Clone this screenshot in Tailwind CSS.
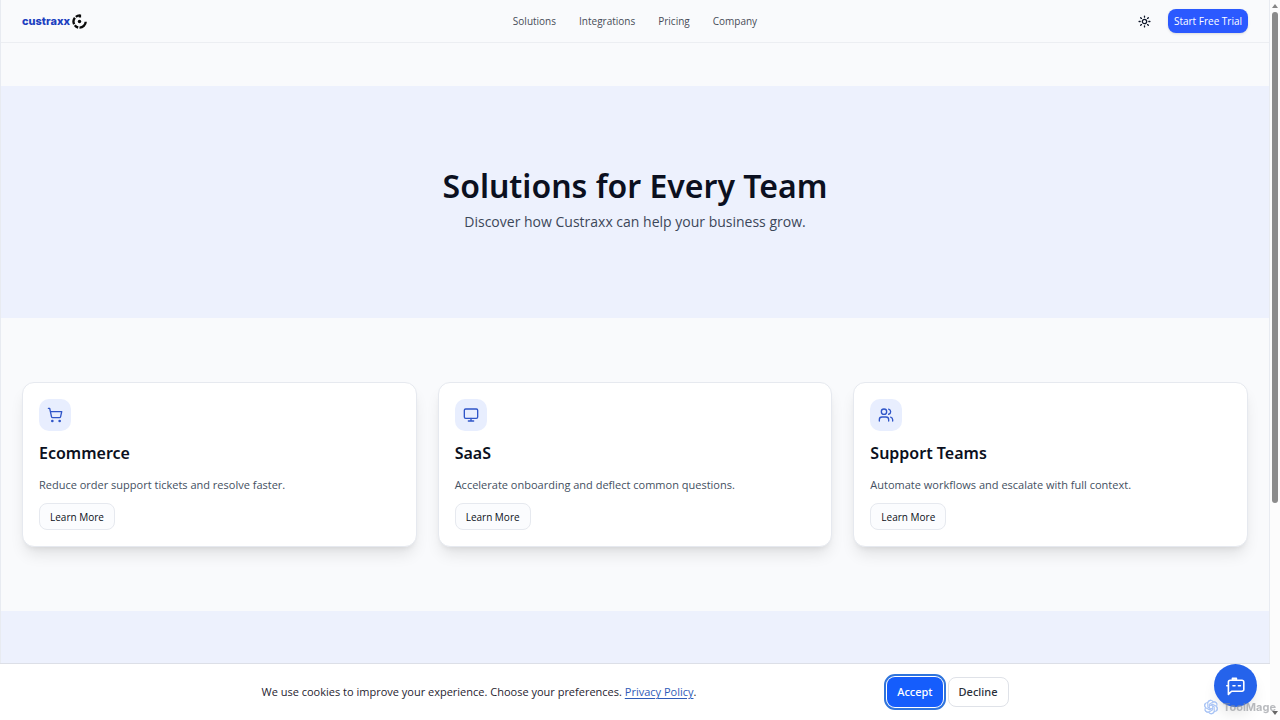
<!DOCTYPE html>
<html lang="en">
<head>
    <meta charset="UTF-8">
    <meta name="viewport" content="width=device-width, initial-scale=1.0">
    <title>Solutions - Custraxx</title>
    <script src="https://cdn.jsdelivr.net/npm/@tailwindcss/browser@4"></script>
</head>
<body class="bg-[#f9fafc] font-['Open_Sans','Noto_Sans',sans-serif] text-[#0b1020]">

    <div class="flex min-h-screen">
        <div class="flex min-w-0 flex-1 flex-col border-x border-[#e8ebf1]">

            <header class="grid h-[43px] grid-cols-[1fr_auto_1fr] items-center border-b border-[#eceef2] px-[21px]">
                <a href="#" class="flex items-center gap-[2px]" aria-label="Custraxx home">
                    <span class="font-['Inter',sans-serif] text-[11px] font-extrabold leading-4 text-[#1d3fc0]">custraxx</span>
                    <svg class="size-[15px]" viewBox="0 0 14 14" fill="none" stroke="#0a0a0a" stroke-width="2.2">
                        <path d="M7.4 1.3A5.7 5.7 0 0 0 3.6 2.6M2.7 3.4A5.7 5.7 0 0 0 2 9.5M2.6 10.5A5.7 5.7 0 0 0 5.8 12.6M7 12.7A5.7 5.7 0 0 0 12.8 7.2M7.4 .4V3.2"/>
                        <circle cx="7" cy="7" r="1.6" fill="#0a0a0a" stroke="none"/>
                    </svg>
                </a>
                <nav class="flex gap-[23px] text-[10px] leading-4 text-[#474c57]">
                    <a href="#">Solutions</a>
                    <a href="#">Integrations</a>
                    <a href="#">Pricing</a>
                    <a href="#">Company</a>
                </nav>
                <div class="flex items-center justify-end gap-4">
                    <button type="button" aria-label="Toggle theme" class="p-px">
                        <svg class="size-[13px]" viewBox="0 0 24 24" fill="none" stroke="#0f172a" stroke-width="2.4" stroke-linecap="round">
                            <circle cx="12" cy="12" r="4"/>
                            <path d="M12 2v2M12 20v2M4.93 4.93l1.41 1.41M17.66 17.66l1.41 1.41M2 12h2M20 12h2M6.34 17.66l-1.41 1.41M19.07 4.93l-1.41 1.41"/>
                        </svg>
                    </button>
                    <button type="button" class="h-6 w-20 rounded-lg bg-[#2b59ff] text-[10px] font-medium leading-4 text-white shadow-sm">Start Free Trial</button>
                </div>
            </header>

            <main class="flex flex-1 flex-col pt-[43px]">
                <section class="flex h-[232px] flex-col items-center justify-center bg-[#edf1fd] text-center">
                    <h1 class="font-['Noto_Sans',sans-serif] text-[32px] font-semibold leading-10">Solutions for Every Team</h1>
                    <p class="text-sm leading-8 text-[#3c4759]">Discover how Custraxx can help your business grow.</p>
                </section>

                <section class="grid grid-cols-3 gap-[21px] px-[21px] py-16">
                    <article class="rounded-xl border border-[#e6e9ef] bg-white p-4 shadow-lg">
                        <div class="flex size-8 items-center justify-center rounded-[10px] bg-[#e8eefe]">
                            <svg class="size-4" viewBox="0 0 24 24" fill="none" stroke="#2f55c8" stroke-width="2" stroke-linecap="round" stroke-linejoin="round">
                                <circle cx="8" cy="21" r="1"/>
                                <circle cx="19" cy="21" r="1"/>
                                <path d="M2.05 2.05h2l2.66 12.42a2 2 0 0 0 2 1.58h9.78a2 2 0 0 0 1.95-1.57l1.65-7.43H5.12"/>
                            </svg>
                        </div>
                        <h2 class="mt-[10px] font-['Noto_Sans',sans-serif] text-base font-semibold leading-6">Ecommerce</h2>
                        <p class="mt-[10px] text-[11px] leading-5 text-[#44505f]">Reduce order support tickets and resolve faster.</p>
                        <button type="button" class="mt-2 h-[27px] rounded-lg border border-[#e6e9ef] bg-[#fbfcfe] px-[10px] text-[10px] leading-4">Learn More</button>
                    </article>

                    <article class="rounded-xl border border-[#e6e9ef] bg-white p-4 shadow-lg">
                        <div class="flex size-8 items-center justify-center rounded-[10px] bg-[#e8eefe]">
                            <svg class="size-4" viewBox="0 0 24 24" fill="none" stroke="#2f55c8" stroke-width="2" stroke-linecap="round" stroke-linejoin="round">
                                <rect x="2" y="3" width="20" height="14" rx="2"/>
                                <path d="M8 21h8M12 17v4"/>
                            </svg>
                        </div>
                        <h2 class="mt-[10px] font-['Noto_Sans',sans-serif] text-base font-semibold leading-6">SaaS</h2>
                        <p class="mt-[10px] text-[11px] leading-5 text-[#44505f]">Accelerate onboarding and deflect common questions.</p>
                        <button type="button" class="mt-2 h-[27px] rounded-lg border border-[#e6e9ef] bg-[#fbfcfe] px-[10px] text-[10px] leading-4">Learn More</button>
                    </article>

                    <article class="rounded-xl border border-[#e6e9ef] bg-white p-4 shadow-lg">
                        <div class="flex size-8 items-center justify-center rounded-[10px] bg-[#e8eefe]">
                            <svg class="size-4" viewBox="0 0 24 24" fill="none" stroke="#2f55c8" stroke-width="2" stroke-linecap="round" stroke-linejoin="round">
                                <path d="M16 21v-2a4 4 0 0 0-4-4H6a4 4 0 0 0-4 4v2"/>
                                <circle cx="9" cy="7" r="4"/>
                                <path d="M22 21v-2a4 4 0 0 0-3-3.87M16 3.13a4 4 0 0 1 0 7.75"/>
                            </svg>
                        </div>
                        <h2 class="mt-[10px] font-['Noto_Sans',sans-serif] text-base font-semibold leading-6">Support Teams</h2>
                        <p class="mt-[10px] text-[11px] leading-5 text-[#44505f]">Automate workflows and escalate with full context.</p>
                        <button type="button" class="mt-2 h-[27px] rounded-lg border border-[#e6e9ef] bg-[#fbfcfe] px-[10px] text-[10px] leading-4">Learn More</button>
                    </article>
                </section>

                <section class="min-h-[109px] flex-1 bg-[#edf1fd]"></section>
            </main>
        </div>

        <!-- room for the scrollbar -->
        <div class="w-[10px] shrink-0"></div>
    </div>

    <!-- cookie banner -->
    <div class="fixed bottom-0 left-0 right-[10px] border-t border-[#dcdfe7] bg-white py-[13px]">
        <div class="mx-auto flex max-w-[747px] items-center justify-between">
            <p class="text-[11px] leading-5 text-[#1f2430]">We use cookies to improve your experience. Choose your preferences. <a href="#" class="text-[#2f5bb8] underline underline-offset-2">Privacy Policy</a>.</p>
            <div class="flex gap-[5px] font-['Noto_Sans',sans-serif] text-[11px] font-medium leading-4">
                <button type="button" class="h-[30px] rounded-lg bg-[#155dfc] px-[10px] text-white outline-2 outline-offset-1 outline-[#2f74dc]">Accept</button>
                <button type="button" class="h-[30px] rounded-lg border border-[#dfe2e8] bg-white px-[10px] text-[#2a2f3a]">Decline</button>
            </div>
        </div>
    </div>

    <!-- scrollbar -->
    <div class="fixed inset-y-0 right-0 flex w-[10px] flex-col items-center bg-[#fcfcfc] pt-1 pb-[5px]">
        <svg class="h-1 w-[6px]" viewBox="0 0 6 4" fill="#858585"><path d="M3 0l3 4H0z"/></svg>
        <div class="mt-1 h-[69%] w-[6px] rounded-full bg-[#8b8b8b]"></div>
        <svg class="mt-auto h-1 w-[6px]" viewBox="0 0 6 4" fill="#666"><path d="M0 0h6L3 4z"/></svg>
    </div>

    <!-- chat launcher -->
    <button type="button" aria-label="Open chat" class="fixed bottom-[13px] right-[23px] flex size-[43px] items-center justify-center rounded-full bg-[#2563eb] shadow-lg">
        <svg class="size-5" viewBox="0 0 20 20" fill="none" stroke="#fff" stroke-width="1.6" stroke-linecap="round" stroke-linejoin="round">
            <path d="M2.4 18.4V6a1.8 1.8 0 0 1 1.8-1.8h11.8A1.8 1.8 0 0 1 17.8 6v7.4a1.8 1.8 0 0 1-1.8 1.8H5.6z"/>
            <path d="M6.4 3.8V2.4h4v1.4" fill="#fff"/>
            <path d="M.8 9.8h1.6M7 9.8h2M12.4 9.8h2"/>
        </svg>
    </button>

    <div class="pointer-events-none fixed bottom-1 right-1 flex items-center gap-1">
        <svg class="size-4" viewBox="0 0 24 24" fill="none" stroke="#a9c4f5" stroke-width="1.6" stroke-linecap="round">
            <path id="petal" d="M7 5.5a4.6 4.6 0 0 1 8.2-1.6M9.4 13.5V8l5-3a4.6 4.6 0 0 1 6.4 2"/>
            <use href="#petal" transform="rotate(60 12 12)"/>
            <use href="#petal" transform="rotate(120 12 12)"/>
            <use href="#petal" transform="rotate(180 12 12)"/>
            <use href="#petal" transform="rotate(240 12 12)"/>
            <use href="#petal" transform="rotate(300 12 12)"/>
        </svg>
        <span class="font-['Inter',sans-serif] text-[11px] font-bold leading-[18px] text-[#8a8d94]/60">ToolMage</span>
    </div>

</body>
</html>
